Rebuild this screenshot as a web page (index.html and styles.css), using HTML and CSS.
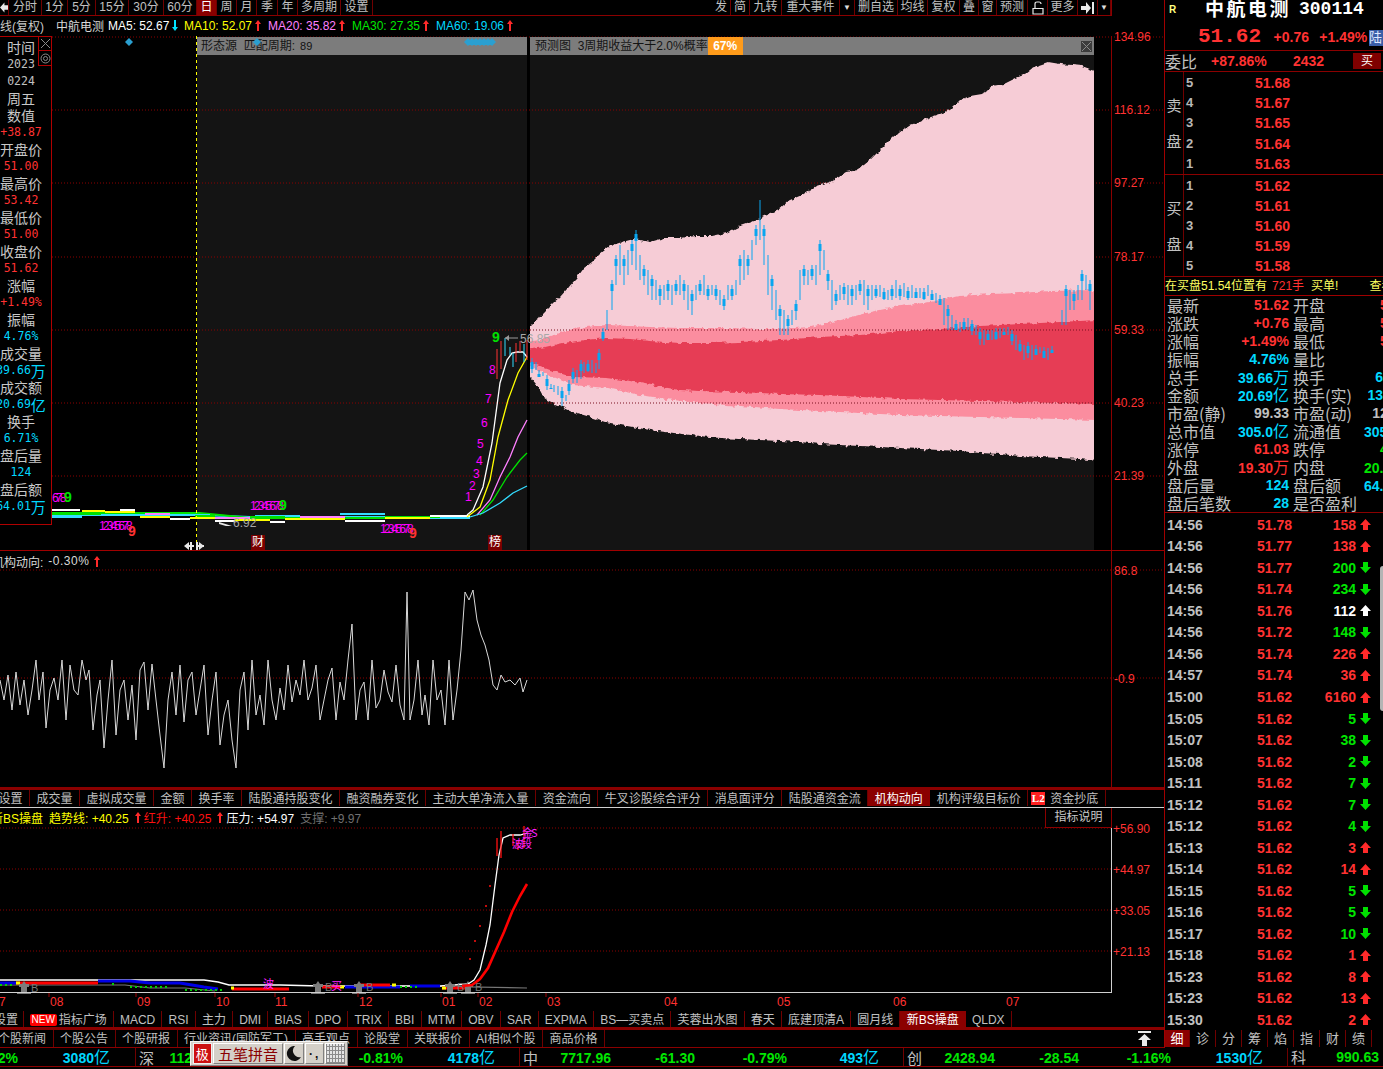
FILE: index.html
```html
<!DOCTYPE html>
<html lang="zh">
<head>
<meta charset="utf-8">
<title>中航电测 300114</title>
<link rel="stylesheet" href="styles.css">
</head>
<body>
<svg class="defs" width="0" height="0">
  <symbol id="up" viewBox="0 0 11 11"><path d="M5.5 0L11 6H8V11H3V6H0Z"/></symbol>
  <symbol id="down" viewBox="0 0 11 11"><path d="M5.5 11L11 5H8V0H3V5H0Z"/></symbol>
  <symbol id="thin-up" viewBox="0 0 6 11"><path d="M3 0L6 4H4V11H2V4H0Z"/></symbol>
  <symbol id="thin-down" viewBox="0 0 6 11"><path d="M3 11L6 7H4V0H2V7H0Z"/></symbol>
  <filter id="rough" x="-2%" y="-2%" width="104%" height="104%">
    <feTurbulence type="fractalNoise" baseFrequency="0.22" numOctaves="2" seed="7"/>
    <feDisplacementMap in="SourceGraphic" scale="5" xChannelSelector="R" yChannelSelector="G"/>
  </filter>
</svg>
<div class="app">
  <div class="main">
    <div class="toolbar">
      <div class="tool-group">
        <span class="tool w9"><svg width="9" height="11" viewBox="0 0 9 11"><path class="fill-light" d="M0 5.5L5 0V3H9V8H5V11Z"/></svg></span>
        <span class="tool w33">分时</span><span class="tool w26">1分</span><span class="tool w28">5分</span><span class="tool w33">15分</span><span class="tool w35">30分</span><span class="tool w33">60分</span><span class="tool w20 active">日</span><span class="tool w20">周</span><span class="tool w20">月</span><span class="tool w21">季</span><span class="tool w20">年</span><span class="tool w43">多周期</span><span class="tool w32">设置</span>
      </div>
      <div class="tool-group">
        <span class="tool w19">发</span><span class="tool w19">简</span><span class="tool w32">九转</span><span class="tool w58">重大事件</span><span class="tool w15 caret">▼</span><span class="tool w43">删自选</span><span class="tool w30">均线</span><span class="tool w32">复权</span><span class="tool w19">叠</span><span class="tool w18">窗</span><span class="tool w31">预测</span>
        <span class="tool w20"><svg width="12" height="14" viewBox="0 0 12 14"><path class="stroke-light" d="M1 7.5H11V13H1ZM3 7V3Q3 1 5 1H7Q9 1 9 3" fill="none"/></svg></span>
        <span class="tool w30">更多</span>
        <span class="tool w20"><svg width="13" height="12" viewBox="0 0 13 12"><path class="fill-light" d="M0 4H5V0L10 6L5 12V8H0ZM11 0H13V12H11Z"/></svg></span>
        <span class="tool w13 caret">▼</span>
      </div>
    </div>
    <div class="ma-row">
      <span class="ma-name">K线(复权)</span>
      <span class="ma-stock">中航电测</span>
      <span class="ma ma-first c-white">MA5: 52.67<svg class="ma-arrow c-cyan"><use href="#thin-down"/></svg></span>
      <span class="ma c-yellow">MA10: 52.07<svg class="ma-arrow c-red"><use href="#thin-up"/></svg></span>
      <span class="ma c-pink">MA20: 35.82<svg class="ma-arrow c-red"><use href="#thin-up"/></svg></span>
      <span class="ma c-green">MA30: 27.35<svg class="ma-arrow c-red"><use href="#thin-up"/></svg></span>
      <span class="ma c-cyan">MA60: 19.06<svg class="ma-arrow c-red"><use href="#thin-up"/></svg></span>
    </div>

    <div class="chart chart-main">
      <svg class="plot" width="1164" height="514" viewBox="0 36 1164 514">
        <rect class="panel-dark" x="197" y="55" width="330" height="495"/>
        <rect class="panel-dark" x="530" y="55" width="564" height="495"/>
        <g class="grid">
          <path d="M52 37H1164M52 110H1164M52 183H1164M52 257H1164M52 330H1164M52 403H1164M52 476H1164"/>
        </g>
        <clipPath id="cloud-clip"><rect x="530" y="55" width="564" height="495"/></clipPath>
        <g clip-path="url(#cloud-clip)">
          <path class="cloud-outer" d="M526 330L534 322L538 319L544 312L552 304L560 297L568 288L576 279L584 268L592 262L600 254L610 246L622 242L634 239L650 242L664 238L680 238L696 236L712 236L726 233L740 226L752 222L764 216L778 210L790 200L802 195L816 186L830 182L846 172L858 170L870 160L880 150L892 138L904 128L916 124L928 118L940 114L950 110L960 100L970 96L982 94L992 86L1004 84L1016 78L1026 74L1036 66L1048 62L1060 64L1072 65L1082 66L1098 72V461L1080 459L1060 458L1040 457L1020 456L1000 454L980 453L960 451L940 450L920 449L900 448L880 447L860 446L840 445L820 444L800 442L780 441L760 440L740 439L720 438L700 436L673 433L650 430L627 426L605 422L587 416L573 412L560 406L550 402L543 397L536 384L526 372Z"/>
          <path class="cloud-mid" d="M526 342L540 340L550 336L565 331L580 328L595 326L607 325L630 326L650 327L680 328L700 328L730 328L760 329L780 329L810 327L840 320L870 312L900 306L930 302L960 296L990 294L1020 293L1050 291L1098 290V420L1060 419L1020 418L980 417L940 416L900 415L860 413L820 411L780 409L740 406L700 403L673 400L640 395L607 388L573 385L555 378L540 371L526 364Z"/>
          <path class="cloud-inner" d="M526 350L545 347L563 343L585 340L607 338L630 339L650 341L680 343L710 343L740 342L780 340L820 337L860 335L900 331L940 329L980 326L1020 324L1060 322L1098 320V404L1060 403L1020 402L980 401L940 400L900 399L860 397L820 395L780 394L740 392L700 391L680 390L650 385L630 381L607 378L573 377L550 370L526 361Z"/>
        </g>
        <g class="grid grid-over">
          <path d="M530 330H1094M530 403H1094"/>
        </g>
        <path class="candle-wick" d="M532 358V373M536 362V370M539 370V377M543 372V376M547 375V390M551 384V389M554 385V392M558 386V395M562 387V406M566 395V401M569 380V395M573 368V383M577 370V383M581 360V379M584 362V373M588 360V372M592 360V373M596 363V373M599 349V369M603 328V341M607 310V330M612 280V310M616 255V285M620 245V275M624 255V285M628 250V275M632 240V265M636 230V270M640 255V280M644 265V285M648 270V295M652 275V300M656 280V300M660 285V305M664 285V300M668 280V300M672 285V305M676 280V295M680 275V295M684 280V300M688 285V310M692 290V315M696 285V300M700 280V295M704 275V295M708 285V300M712 285V295M716 285V300M720 290V305M724 295V310M728 285V300M732 285V300M736 280V295M740 255V285M744 250V280M748 255V275M752 240V260M756 225V245M760 200V240M764 225V265M768 255V295M772 275V310M776 290V320M780 305V335M784 310V335M788 315V335M792 310V325M796 300V320M800 270V300M804 265V285M808 270V285M812 265V280M816 265V285M820 240V275M824 250V270M828 270V290M832 280V310M836 290V305M840 285V300M844 283V300M848 285V305M852 285V305M856 285V300M860 280V295M864 280V305M868 285V310M872 285V300M876 285V298M880 285V297M884 288V300M888 290V300M892 285V300M896 280V298M900 285V300M904 283V297M908 287V300M912 285V298M916 288V298M920 288V298M924 288V300M928 285V296M932 290V300M936 293V303M940 295V305M944 298V325M948 305V330M952 315V330M956 320V330M960 322V332M964 318V330M968 318V330M972 320V335M976 325V335M980 328V345M984 330V345M988 330V340M992 330V340M996 328V340M1000 328V338M1004 328V335M1008 327V335M1012 330V345M1016 335V350M1020 340V352M1024 345V360M1028 342V358M1032 345V360M1036 345V355M1040 347V353M1044 347V358M1048 348V360M1052 346V353M1062 310V325M1066 285V325M1070 290V310M1074 290V310M1078 285V300M1082 270V300M1086 275V290M1090 280V310"/>
        <path class="candle-body" d="M532 358V373M539 370V377M543 372V376M547 375V390M551 384V389M562 387V406M569 380V395M573 368V383M581 360V379M588 360V372M599 349V369M603 328V341M612 280V310M616 255V285M624 255V285M632 240V265M636 230V270M644 265V285M652 275V300M660 285V305M668 280V300M676 280V295M684 280V300M692 290V315M700 280V295M708 285V300M716 285V300M724 295V310M732 285V300M740 255V285M748 255V275M756 225V245M764 225V265M772 275V310M780 305V335M788 315V335M796 300V320M804 265V285M812 265V280M820 240V275M828 270V290M836 290V305M844 283V300M852 285V305M860 280V295M868 285V310M876 285V298M884 288V300M892 285V300M900 285V300M908 287V300M916 288V298M924 288V300M932 290V300M940 295V305M948 305V330M956 320V330M964 318V330M972 320V335M980 328V345M988 330V340M996 328V340M1004 328V335M1012 330V345M1020 340V352M1028 342V358M1036 345V355M1044 347V358M1052 346V353M1066 285V325M1074 290V310M1082 270V300M1090 280V310"/>

        <g class="ma-band">
          <path class="l-cyan" d="M52 515H200L250 517H470"/>
          <path class="l-green" d="M52 513H200L250 518H470"/>
          <path class="l-pink" d="M66 514H100M145 514H170M215 518H250M300 517H345M440 516H465"/>
          <path class="l-cyan" d="M52 517H82M170 515H210M255 516H300M340 514H385M430 518H470"/>
          <path class="l-green" d="M52 514H100V513H140M195 516H215M250 517H285M345 518H385M385 517H440"/>
          <path class="l-yellow" d="M82 511H105M105 512H135M140 517H170M190 518H215M235 520H270M285 519H345M385 518H430"/>
          <path class="l-white" d="M52 510H80M120 510H135M170 519H190M215 521H235M270 522H285M345 521H385M430 516H470"/>
        </g>
        <g class="ma-curves">
          <path class="l-white" d="M467 515L473 510L483 487L492 443L500 383L507 360L512 353L517 352L523 352L527 357"/>
          <path class="l-yellow" d="M467 517L480 507L490 480L498 437L508 400L518 373L527 357"/>
          <path class="l-pink" d="M477 515L490 500L500 477L510 457L518 437L527 420"/>
          <path class="l-green" d="M480 515L493 500L507 477L520 460L527 453"/>
          <path class="l-cyan" d="M470 517L483 513L500 503L513 493L527 486"/>
        </g>
        <path class="tick-red" d="M497 349V379M501 341V369M516 343V362M520 341V352M527 340V360"/>
        <path class="tick-cyan" d="M505 338V356M510 347V355M513 353V367M524 344V362"/>
        <path class="l-gray" d="M505 338H518"/>
        <path class="fill-gray" d="M505 338L509 335V341Z"/>
        <text class="mark-gray" x="520" y="343">56.85</text>
        <text class="mark-gray" x="233" y="527">6.92</text>
        <path class="fill-light" d="M219 522L232 526H226L219 524Z"/>

        <g class="td">
          <text x="465" y="501">1</text><text x="469" y="490">2</text><text x="473" y="478">3</text><text x="476" y="465">4</text><text x="477" y="448">5</text><text x="481" y="427">6</text><text x="485" y="403">7</text><text x="489" y="374">8</text>
        </g>
        <text class="td-nine c-fill-green" x="492" y="342">9</text>
        <text class="td-run" x="52" y="502">678</text><text class="td-nine c-fill-green" x="64" y="502">9</text>
        <text class="td-run" x="99" y="530">12345678</text><text class="td-nine c-fill-red" x="128" y="536">9</text>
        <text class="td-run" x="250" y="510">12345678</text><text class="td-nine c-fill-green" x="279" y="510">9</text>
        <text class="td-run" x="380" y="533">12345678</text><text class="td-nine c-fill-red" x="409" y="538">9</text>

        <path class="dash-yellow" d="M196.500 36V550"/>
        <path class="fill-light" d="M184 546L189 542V550ZM204 546L199 542V550ZM190 542H192V550H190ZM196 542H198V550H196Z"/>
        <path class="fill-light" d="M189 545H194V547H189ZM198 545H204V547H198Z"/>
        <path class="axis-line" d="M1111.500 36V550"/>
        <g class="axis-text">
          <text x="1114" y="41">134.96</text><text x="1114" y="114">116.12</text><text x="1114" y="187">97.27</text><text x="1114" y="261">78.17</text><text x="1114" y="334">59.33</text><text x="1114" y="407">40.23</text><text x="1114" y="480">21.39</text>
        </g>
      </svg>

      <div class="pane-head pane-source"><span class="head-a">形态源&nbsp;&nbsp;匹配周期:</span><span class="head-b">89</span></div>
      <div class="pane-head pane-forecast">
        <span class="head-a">预测图&nbsp;&nbsp;3周期收益大于2.0%概率</span><span class="badge">67%</span>
        <span class="pane-close"><svg width="11" height="11" viewBox="0 0 11 11"><path d="M1 1L10 10M10 1L1 10"/></svg></span>
      </div>
      <svg class="signal-marks" width="500" height="14" viewBox="0 36 500 14">
        <path d="M129 38L133 42L129 46L125 42ZM257 38L261 42L257 46L253 42Z"/>
        <path d="M468 38L472 42L468 46L464 42ZM472 38L476 42L472 46L468 42ZM476 38L480 42L476 46L472 42ZM480 38L484 42L480 46L476 42ZM484 38L488 42L484 46L480 42ZM488 38L492 42L488 46L484 42ZM492 38L496 42L492 46L488 42Z"/>
      </svg>
      <span class="tag tag-cai">财</span>
      <span class="tag tag-bang">榜</span>

      <div class="info">
        <div class="info-tools">
          <span class="info-btn"><svg width="11" height="11" viewBox="0 0 11 11"><path d="M1 1L10 10M10 1L1 10"/></svg></span>
          <span class="info-btn"><svg width="11" height="11" viewBox="0 0 11 11"><circle cx="5.500" cy="5.500" r="4.500"/><circle cx="5.500" cy="5.500" r="2"/></svg></span>
        </div>
        <div class="i-l">时间</div><div class="i-v">2023</div><div class="i-v">0224</div><div class="i-l">周五</div><div class="i-l">数值</div>
        <div class="i-v c-red">+38.87</div><div class="i-l">开盘价</div><div class="i-v c-red">51.00</div><div class="i-l">最高价</div><div class="i-v c-red">53.42</div>
        <div class="i-l">最低价</div><div class="i-v c-red">51.00</div><div class="i-l">收盘价</div><div class="i-v c-red">51.62</div><div class="i-l">涨幅</div>
        <div class="i-v c-red">+1.49%</div><div class="i-l">振幅</div><div class="i-v c-cyan">4.76%</div><div class="i-l">成交量</div><div class="i-v c-cyan">39.66<b>万</b></div>
        <div class="i-l">成交额</div><div class="i-v c-cyan">20.69<b>亿</b></div><div class="i-l">换手</div><div class="i-v c-cyan">6.71%</div><div class="i-l">盘后量</div>
        <div class="i-v c-cyan">124</div><div class="i-l">盘后额</div><div class="i-v c-cyan">64.01<b>万</b></div>
      </div>
    </div>

    <div class="chart chart-ind">
      <svg class="plot" width="1164" height="236" viewBox="0 551 1164 236">
        <g class="grid"><path d="M0 570H1164M0 678H1164"/></g>
        <polyline class="l-thin" points="0,680 4,700 8,675 12,710 16,672 20,705 24,680 28,715 32,690 36,660 39,700 43,672 46,728 50,690 54,678 58,700 62,660 66,720 70,665 74,690 78,695 82,660 86,680 89,670 93,730 97,695 100,680 104,748 108,700 112,660 116,735 120,690 124,680 128,720 132,685 136,740 140,670 144,662 148,710 152,664 156,700 160,735 164,768 168,700 172,672 176,715 180,665 184,722 188,680 192,672 196,715 200,690 204,665 208,735 212,700 216,672 220,745 224,715 228,700 232,740 236,768 240,690 244,672 248,730 252,660 256,715 260,695 264,725 268,660 272,700 276,720 280,688 284,710 288,665 292,702 296,680 300,695 304,660 308,700 312,688 316,665 320,720 324,700 328,680 332,668 336,720 340,682 344,700 348,660 352,624 356,720 360,690 364,682 368,720 372,660 376,708 380,700 384,670 388,692 392,702 396,665 400,705 404,720 407,592 410,720 414,700 418,660 422,715 425,695 429,725 433,660 437,700 441,690 445,725 449,660 453,720 457,690 461,650 465,592 469,600 473,590 477,620 481,635 485,645 489,660 493,685 497,690 501,675 505,682 510,680 515,685 520,678 523,692 527,680"/>
        <path class="axis-line" d="M1111.500 551V787"/>
        <g class="axis-text"><text x="1114" y="575">86.8</text><text x="1114" y="683">-0.9</text></g>
      </svg>
      <div class="chart-label ind-label"><span class="c-light">机构动向:</span><span class="c-light ind-value">-0.30%</span><svg class="ma-arrow c-red"><use href="#thin-up"/></svg></div>
    </div>

    <div class="tabs tabs-a">
      <span class="tab clip-a">设置</span><span class="tab">成交量</span><span class="tab">虚拟成交量</span><span class="tab">金额</span><span class="tab">换手率</span><span class="tab">陆股通持股变化</span><span class="tab">融资融券变化</span><span class="tab">主动大单净流入量</span><span class="tab">资金流向</span><span class="tab">牛叉诊股综合评分</span><span class="tab">消息面评分</span><span class="tab">陆股通资金流</span><span class="tab active">机构动向</span><span class="tab">机构评级目标价</span><span class="tab tab-l2"><i class="l2">L2</i>资金抄底</span>
    </div>

    <div class="chart chart-bs">
      <svg class="plot" width="1164" height="203" viewBox="0 808 1164 203">
        <g class="grid"><path d="M0 828H1111M0 869H1111M0 910H1111M0 951H1111"/></g>
        <path class="l-gray2" d="M0 985H125L150 988H185L215 991M400 986H414L527 988"/>
        <g class="low-bands">
          <path class="b-white" d="M0 980H204L218 982L229 985H280L320 986H440L468 984"/>
          <path class="b-blue" d="M0 983H16M98 981H130L150 983H180L204 987L218 989M345 987H400M410 986H440"/>
          <path class="b-red" d="M16 983H98M232 989H289M322 987H340M360 985H390M442 988H470"/>
          <path class="b-yellow" d="M16 983H20M231 988H234M340 987H344M392 985H396M442 988H446"/>
        </g>
        <path class="dots-green" d="M0 985H14M112 984H116M130 987H170M185 990H222M400 987H420"/>
        <g class="anchors">
          <path d="M24 981L26 984H29V987H27V992H31V994H17V992H21V987H19V984H22Z"/>
          <path d="M318 981L320 984H323V987H321V992H325V994H311V992H315V987H313V984H316Z"/>
          <path d="M359 981L361 984H364V987H362V992H366V994H352V992H356V987H354V984H357Z"/>
          <path d="M450 981L452 984H455V987H453V992H457V994H443V992H447V987H445V984H448Z"/>
          <path d="M468 981L470 984H473V987H471V992H475V994H461V992H465V987H463V984H466Z"/>
        </g>
        <text class="mark-b" x="31" y="992">B</text><text class="mark-b" x="325" y="991">B</text><text class="mark-b" x="366" y="991">B</text><text class="mark-b" x="457" y="991">B</text><text class="mark-b" x="475" y="991">B</text>
        <path class="l-bs-white" d="M468 984L474 980L480 970L486 945L490 925L495 885L499 855L503 838L510 835L520 835L527 833"/>
        <path class="l-bs-red" d="M462 986L472 985L480 979L488 968L496 950L504 932L512 912L520 896L527 884"/>
        <path class="tick-bs" d="M497 838V856M501 831V858M513 834V846M518 840V850M524 826V848"/>
        <path class="dots-red" d="M470 958V960M475 940V942M480 925V927M486 905V907M490 885V887"/>
        <text class="bs-mark" x="512" y="848">波段</text><text class="bs-mark" x="522" y="837">金S</text>
        <text class="bs-mark" x="263" y="988">波</text><text class="bs-mark" x="331" y="990">买</text>
        <path class="axis-white" d="M1111.500 808V992.500M0 992.500H1112"/>
        <g class="axis-text">
          <text x="1113" y="833">+56.90</text><text x="1113" y="874">+44.97</text><text x="1113" y="915">+33.05</text><text x="1113" y="956">+21.13</text>
        </g>
        <g class="date-ticks"><path d="M49 993V997M136 993V997M215 993V997M275 993V997M358 993V997M441 993V997M478 993V997M546 993V997"/></g>
        <g class="axis-text dates">
          <text x="-1" y="1006">7</text><text x="50" y="1006">08</text><text x="137" y="1006">09</text><text x="216" y="1006">10</text><text x="275" y="1006">11</text><text x="359" y="1006">12</text><text x="442" y="1006">01</text><text x="479" y="1006">02</text><text x="547" y="1006">03</text><text x="664" y="1006">04</text><text x="777" y="1006">05</text><text x="893" y="1006">06</text><text x="1006" y="1006">07</text>
        </g>
      </svg>
      <div class="chart-label bs-label">
        <span class="c-yellow">新BS操盘</span>
        <span class="c-yellow">趋势线: +40.25</span><svg class="ma-arrow c-red"><use href="#thin-up"/></svg>
        <span class="c-redb">红升: +40.25</span><svg class="ma-arrow c-red"><use href="#thin-up"/></svg>
        <span class="c-white">压力: +54.97</span>
        <span class="c-dim">支撑: +9.97</span>
      </div>
      <span class="explain">指标说明</span>
    </div>

    <div class="tabs tabs-b">
      <span class="tab clip-b">设置</span><span class="tab"><i class="new">NEW</i>指标广场</span><span class="tab">MACD</span><span class="tab">RSI</span><span class="tab">主力</span><span class="tab">DMI</span><span class="tab">BIAS</span><span class="tab">DPO</span><span class="tab">TRIX</span><span class="tab">BBI</span><span class="tab">MTM</span><span class="tab">OBV</span><span class="tab">SAR</span><span class="tab">EXPMA</span><span class="tab">BS—买卖点</span><span class="tab">芙蓉出水图</span><span class="tab">春天</span><span class="tab">底建顶清A</span><span class="tab">圆月线</span><span class="tab active">新BS操盘</span><span class="tab">QLDX</span>
    </div>
    <div class="tabs tabs-c">
      <span class="tab clip-c">个股新闻</span><span class="tab">个股公告</span><span class="tab">个股研报</span><span class="tab">行业资讯(国防军工)</span><span class="tab">高手观点</span><span class="tab">论股堂</span><span class="tab">关联报价</span><span class="tab">AI相似个股</span><span class="tab">商品价格</span>
      <span class="to-top"><svg width="13" height="15" viewBox="0 0 13 15"><path class="fill-light" d="M0 0H13V2H0ZM6.500 3L13 9H9V15H4V9H0Z"/></svg></span>
    </div>
  </div>

  <aside class="side">
    <div class="title-row"><span class="r-mark">R</span><span class="title-name">中航电测</span><span class="title-code">300114</span></div>
    <div class="price-row">
      <span class="big-price">51.62</span><span class="num c-red pr-a">+0.76</span><span class="num c-red pr-b">+1.49%</span><span class="lu">陆</span>
    </div>
    <div class="ratio-row">
      <span class="lab">委比</span><span class="num c-red ra-a">+87.86%</span><span class="num c-red ra-b">2432</span><span class="buy-btn">买</span>
    </div>
    <div class="book book-sell">
      <div class="book-side">卖<br>盘</div>
      <div class="book-rows">
        <div class="book-row"><span class="lvl">5</span><span class="num c-red">51.68</span></div>
        <div class="book-row"><span class="lvl">4</span><span class="num c-red">51.67</span></div>
        <div class="book-row"><span class="lvl">3</span><span class="num c-red">51.65</span></div>
        <div class="book-row"><span class="lvl">2</span><span class="num c-red">51.64</span></div>
        <div class="book-row"><span class="lvl">1</span><span class="num c-red">51.63</span></div>
      </div>
    </div>
    <div class="book book-buy">
      <div class="book-side">买<br>盘</div>
      <div class="book-rows">
        <div class="book-row"><span class="lvl">1</span><span class="num c-red">51.62</span></div>
        <div class="book-row"><span class="lvl">2</span><span class="num c-red">51.61</span></div>
        <div class="book-row"><span class="lvl">3</span><span class="num c-red">51.60</span></div>
        <div class="book-row"><span class="lvl">4</span><span class="num c-red">51.59</span></div>
        <div class="book-row"><span class="lvl">5</span><span class="num c-red">51.58</span></div>
      </div>
    </div>
    <div class="notice"><span>在买盘51.54位置有</span><span class="n-qty">721手</span><span>买单!</span><span class="n-look">查看</span></div>
    <div class="stats">
      <span class="lab">最新</span><span class="num c-red">51.62</span><span class="lab">开盘</span><span class="num c-red">51.00</span>
      <span class="lab">涨跌</span><span class="num c-red">+0.76</span><span class="lab">最高</span><span class="num c-red">53.42</span>
      <span class="lab">涨幅</span><span class="num c-red">+1.49%</span><span class="lab">最低</span><span class="num c-red">51.00</span>
      <span class="lab">振幅</span><span class="num c-cyan">4.76%</span><span class="lab">量比</span><span class="num c-gray">1.02</span>
      <span class="lab">总手</span><span class="num c-cyan">39.66<b>万</b></span><span class="lab">换手</span><span class="num c-cyan">6.71%</span>
      <span class="lab">金额</span><span class="num c-cyan">20.69<b>亿</b></span><span class="lab">换手(实)</span><span class="num c-cyan">13.82%</span>
      <span class="lab">市盈(静)</span><span class="num c-gray">99.33</span><span class="lab">市盈(动)</span><span class="num c-gray">128.50</span>
      <span class="lab">总市值</span><span class="num c-cyan">305.0<b>亿</b></span><span class="lab">流通值</span><span class="num c-cyan">305.0<b>亿</b></span>
      <span class="lab">涨停</span><span class="num c-red">61.03</span><span class="lab">跌停</span><span class="num c-green">40.69</span>
      <span class="lab">外盘</span><span class="num c-red">19.30<b>万</b></span><span class="lab">内盘</span><span class="num c-green">20.36<b>万</b></span>
      <span class="lab">盘后量</span><span class="num c-cyan">124</span><span class="lab">盘后额</span><span class="num c-cyan">64.01<b>万</b></span>
      <span class="lab">盘后笔数</span><span class="num c-cyan">28</span><span class="lab">是否盈利</span><span class="num c-cyan"></span>
    </div>
    <div class="ticks">
      <div class="tk"><span class="tk-t">14:56</span><span class="num c-red">51.78</span><span class="num c-red">158</span><svg class="tk-a c-red"><use href="#up"/></svg></div>
      <div class="tk"><span class="tk-t">14:56</span><span class="num c-red">51.77</span><span class="num c-red">138</span><svg class="tk-a c-red"><use href="#up"/></svg></div>
      <div class="tk"><span class="tk-t">14:56</span><span class="num c-red">51.77</span><span class="num c-green">200</span><svg class="tk-a c-green"><use href="#down"/></svg></div>
      <div class="tk"><span class="tk-t">14:56</span><span class="num c-red">51.74</span><span class="num c-green">234</span><svg class="tk-a c-green"><use href="#down"/></svg></div>
      <div class="tk"><span class="tk-t">14:56</span><span class="num c-red">51.76</span><span class="num c-white">112</span><svg class="tk-a c-white"><use href="#up"/></svg></div>
      <div class="tk"><span class="tk-t">14:56</span><span class="num c-red">51.72</span><span class="num c-green">148</span><svg class="tk-a c-green"><use href="#down"/></svg></div>
      <div class="tk"><span class="tk-t">14:56</span><span class="num c-red">51.74</span><span class="num c-red">226</span><svg class="tk-a c-red"><use href="#up"/></svg></div>
      <div class="tk"><span class="tk-t">14:57</span><span class="num c-red">51.74</span><span class="num c-red">36</span><svg class="tk-a c-red"><use href="#up"/></svg></div>
      <div class="tk"><span class="tk-t">15:00</span><span class="num c-red">51.62</span><span class="num c-red">6160</span><svg class="tk-a c-red"><use href="#up"/></svg></div>
      <div class="tk"><span class="tk-t">15:05</span><span class="num c-red">51.62</span><span class="num c-green">5</span><svg class="tk-a c-green"><use href="#down"/></svg></div>
      <div class="tk"><span class="tk-t">15:07</span><span class="num c-red">51.62</span><span class="num c-green">38</span><svg class="tk-a c-green"><use href="#down"/></svg></div>
      <div class="tk"><span class="tk-t">15:08</span><span class="num c-red">51.62</span><span class="num c-green">2</span><svg class="tk-a c-green"><use href="#down"/></svg></div>
      <div class="tk"><span class="tk-t">15:11</span><span class="num c-red">51.62</span><span class="num c-green">7</span><svg class="tk-a c-green"><use href="#down"/></svg></div>
      <div class="tk"><span class="tk-t">15:12</span><span class="num c-red">51.62</span><span class="num c-green">7</span><svg class="tk-a c-green"><use href="#down"/></svg></div>
      <div class="tk"><span class="tk-t">15:12</span><span class="num c-red">51.62</span><span class="num c-green">4</span><svg class="tk-a c-green"><use href="#down"/></svg></div>
      <div class="tk"><span class="tk-t">15:13</span><span class="num c-red">51.62</span><span class="num c-red">3</span><svg class="tk-a c-red"><use href="#up"/></svg></div>
      <div class="tk"><span class="tk-t">15:14</span><span class="num c-red">51.62</span><span class="num c-red">14</span><svg class="tk-a c-red"><use href="#up"/></svg></div>
      <div class="tk"><span class="tk-t">15:15</span><span class="num c-red">51.62</span><span class="num c-green">5</span><svg class="tk-a c-green"><use href="#down"/></svg></div>
      <div class="tk"><span class="tk-t">15:16</span><span class="num c-red">51.62</span><span class="num c-green">5</span><svg class="tk-a c-green"><use href="#down"/></svg></div>
      <div class="tk"><span class="tk-t">15:17</span><span class="num c-red">51.62</span><span class="num c-green">10</span><svg class="tk-a c-green"><use href="#down"/></svg></div>
      <div class="tk"><span class="tk-t">15:18</span><span class="num c-red">51.62</span><span class="num c-red">1</span><svg class="tk-a c-red"><use href="#up"/></svg></div>
      <div class="tk"><span class="tk-t">15:23</span><span class="num c-red">51.62</span><span class="num c-red">8</span><svg class="tk-a c-red"><use href="#up"/></svg></div>
      <div class="tk"><span class="tk-t">15:23</span><span class="num c-red">51.62</span><span class="num c-red">13</span><svg class="tk-a c-red"><use href="#up"/></svg></div>
      <div class="tk"><span class="tk-t">15:30</span><span class="num c-red">51.62</span><span class="num c-red">2</span><svg class="tk-a c-red"><use href="#up"/></svg></div>
    </div>
    <div class="side-tabs">
      <span class="st active">细</span><span class="st">诊</span><span class="st">分</span><span class="st">筹</span><span class="st">焰</span><span class="st">指</span><span class="st">财</span><span class="st">绩</span>
    </div>
    <span class="thumb"></span>
  </aside>

  <div class="ticker">
    <div class="seg seg-first"><span class="seg-n">沪</span><span class="num c-green">3279.61</span><span class="num c-green">-18.43</span><span class="num c-green">-0.62%</span><span class="num c-cyan">3080<b>亿</b></span></div>
    <div class="seg"><span class="seg-n">深</span><span class="num c-green">11203.06</span><span class="num c-green">-91.36</span><span class="num c-green">-0.81%</span><span class="num c-cyan">4178<b>亿</b></span></div>
    <div class="seg"><span class="seg-n">中</span><span class="num c-green">7717.96</span><span class="num c-green">-61.30</span><span class="num c-green">-0.79%</span><span class="num c-cyan">493<b>亿</b></span></div>
    <div class="seg"><span class="seg-n">创</span><span class="num c-green">2428.94</span><span class="num c-green">-28.54</span><span class="num c-green">-1.16%</span><span class="num c-cyan">1530<b>亿</b></span></div>
    <div class="seg"><span class="seg-n">科</span><span class="num c-green">990.63</span></div>
  </div>

  <div class="ime">
    <span class="ime-logo">极</span>
    <span class="ime-name">五笔拼音</span>
    <span class="ime-key"><svg width="15" height="15" viewBox="0 0 15 15"><path d="M9 0A7.500 7.500 0 1 0 15 11A6.500 6.500 0 0 1 9 0Z"/></svg></span>
    <span class="ime-key ime-dots">·,</span>
    <span class="ime-key ime-kb"></span>
  </div>
</div>
</body>
</html>
```
FILE: styles.css
```css
* { box-sizing: border-box; }
html, body { margin: 0; padding: 0; background: #000; }
body {
  font-family: "Liberation Sans", "Noto Sans CJK SC", sans-serif;
  font-size: 12px;
  color: #c0c0c0;
}
.defs { position: absolute; }
.app {
  position: relative;
  display: grid;
  grid-template-columns: 1164px 219px;
  grid-template-rows: 1048px 21px;
  width: 1383px;
  height: 1069px;
  overflow: hidden;
  background: #000;
}

/* colours */
.c-red { color: #ff3232; fill: #ff2a2a; }
.c-redb { color: #ff1010; }
.c-cyan { color: #00d8ff; fill: #00e4ff; }
.c-green { color: #00e600; fill: #00e000; }
.c-white { color: #fff; fill: #fff; }
.c-yellow { color: #ffff00; }
.c-pink { color: #ff80ff; }
.c-gray { color: #c0c0c0; }
.c-light { color: #d8d8d8; }
.c-dim { color: #707070; }
.c-fill-green { fill: #00e000; }
.c-fill-red { fill: #ff3232; }
.fill-light { fill: #e8e8e8; }
.fill-gray { fill: #9a9a9a; }
.stroke-light { stroke: #e8e8e8; stroke-width: 1.200; }

/* main column */
.main { display: flex; flex-direction: column; min-width: 0; overflow: hidden; }
.toolbar {
  display: flex;
  justify-content: space-between;
  height: 16px;
  width: 1112px;
  border-bottom: 1px solid #8b0000;
  border-right: 1px solid #8b0000;
  line-height: 15px;
}
.tool-group { display: flex; }
.tool {
  flex: none;
  justify-content: center;
  border-right: 1px solid #6f0000;
  white-space: nowrap;
  display: flex;
  align-items: center;
}
.tool.active { background: #8b0000; color: #fff; }
.w9 { width: 9px; }
.w13 { width: 13px; }
.w15 { width: 15px; }
.w18 { width: 18px; }
.w19 { width: 19px; }
.w20 { width: 20px; }
.w21 { width: 21px; }
.w26 { width: 26px; }
.w28 { width: 28px; }
.w30 { width: 30px; }
.w31 { width: 31px; }
.w32 { width: 32px; }
.w33 { width: 33px; }
.w35 { width: 35px; }
.w43 { width: 43px; }
.w58 { width: 58px; }
.caret { font-size: 8px; color: #ddd; }

.ma-row {
  display: flex;
  align-items: center;
  height: 20px;
  white-space: nowrap;
  padding-bottom: 1px;
}
.ma-name { margin-left: -8px; width: 64px; color: #c8c8c8; }
.ma-stock { width: 52px; color: #d8d8d8; }
.ma { display: inline-flex; align-items: center; width: 84px; gap: 3px; flex: none; }
.ma-first { width: 76px; }
.ma-arrow { width: 6px; height: 11px; flex: none; }

.chart { position: relative; flex: none; }
.chart-main { height: 515px; border-bottom: 1px solid #a00000; }
.chart-ind { height: 236px; overflow: hidden; }
.chart-bs { height: 203px; overflow: hidden; }
.plot { display: block; overflow: visible; }

.panel-dark { fill: #141414; }
.grid path { stroke: #8b0000; stroke-width: 1; stroke-dasharray: 1 2; fill: none; }
.grid-over path { stroke: #7a1020; }
.cloud-outer { fill: #f6ccd6; filter: url(#rough); }
.cloud-mid { fill: #fb8d9f; filter: url(#rough); }
.cloud-inner { fill: #e63e54; filter: url(#rough); }
.candle-wick { stroke: #08a6f0; stroke-width: 1; fill: none; }
.candle-body { stroke: #08a6f0; stroke-width: 3; fill: none; stroke-dasharray: 0 4 7 200; }
.ma-band path { fill: none; stroke-width: 2; }
.ma-curves path { fill: none; stroke-width: 1.300; }
.l-white { stroke: #fff; }
.l-yellow { stroke: #ffff00; }
.l-pink { stroke: #ff80ff; }
.l-green { stroke: #00e000; }
.l-cyan { stroke: #33dcff; }
.l-gray { stroke: #9a9a9a; fill: none; }
.l-thin { fill: none; stroke: #d8d8d8; stroke-width: 1; }
.l-gray2 { fill: none; stroke: #777; stroke-width: 1.200; }
.low-bands path { fill: none; }
.b-white { stroke: #fff; stroke-width: 1.300; }
.b-blue { stroke: #0000e6; stroke-width: 3; }
.b-red { stroke: #ff0000; stroke-width: 3; }
.b-yellow { stroke: #ffff00; stroke-width: 3; }
.dots-green { fill: none; stroke: #00d000; stroke-width: 2; stroke-dasharray: 2 3; }
.anchors path { fill: #7c7c7c; }
.mark-b { font-size: 11px; fill: #777; }
.l-bs-white { fill: none; stroke: #fff; stroke-width: 1.300; }
.l-bs-red { fill: none; stroke: #ff0000; stroke-width: 2.600; }
.tick-bs { fill: none; stroke: #ff1010; stroke-width: 1.300; }
.dots-red { fill: none; stroke: #ff1010; stroke-width: 1.500; }
.bs-mark { font-size: 11px; fill: #ff20ff; font-family: "Noto Sans CJK SC", sans-serif; letter-spacing: -2px; }
.tick-red { stroke: #ff3232; fill: none; }
.tick-cyan { stroke: #33dcff; fill: none; }
.mark-gray { font-size: 12px; fill: #a8a8a8; }
.td text, .td-run { font-size: 12px; fill: #ff00ff; }
.td-run { letter-spacing: -2.800px; }
.td-nine { font-size: 14px; font-weight: bold; }
.signal-marks { position: absolute; left: 0; top: 0; }
.signal-marks path { fill: #2a9fd0; }
.dash-yellow { stroke: #ffff00; stroke-dasharray: 3 3; fill: none; }
.axis-line { stroke: #8b0000; fill: none; }
.axis-white { stroke: #d0d0d0; fill: none; }
.axis-text text { font-size: 12px; fill: #ff3232; }
.dates text { font-size: 12px; }
.date-ticks path { stroke: #a00000; fill: none; }

.pane-head {
  position: absolute;
  top: 1px;
  height: 18px;
  background: #7c7c7c;
  color: #111;
  line-height: 18px;
  white-space: nowrap;
  display: flex;
}
.pane-source { left: 197px; width: 330px; padding-left: 4px; }
.pane-forecast { left: 530px; width: 564px; padding-left: 5px; }
.head-a { color: #141414; }
.head-b { margin-left: 5px; font-size: 11px; }
.badge {
  background: #ff9b1a;
  color: #fff;
  font-weight: bold;
  width: 35px;
  text-align: center;
}
.pane-close {
  position: absolute;
  right: 2px;
  top: 4px;
  width: 11px;
  height: 11px;
  background: #3c3c3c;
  display: flex;
}
.pane-close path, .info-btn path, .info-btn circle { stroke: #8a8a8a; fill: none; }
.tag {
  position: absolute;
  width: 14px;
  height: 15px;
  background: #7a0000;
  color: #fff;
  line-height: 15px;
  text-align: center;
  font-size: 12px;
}
.tag-cai { left: 251px; top: 499px; }
.tag-bang { left: 488px; top: 499px; }

.info {
  position: absolute;
  left: 0;
  top: 0;
  width: 52px;
  height: 489px;
  background: #000;
  border: 1px solid #b00000;
  border-left: 0;
  overflow: hidden;
  padding-top: 2px;
}
.info-tools {
  position: absolute;
  right: 0;
  top: 0;
  width: 13px;
  height: 29px;
  border-left: 1px solid #b00000;
  border-bottom: 1px solid #b00000;
}
.info-btn { display: flex; width: 12px; height: 14px; align-items: center; justify-content: center; border-bottom: 1px solid #b00000; }
.info-btn:last-child { border: 0; }
.i-l, .i-v {
  display: flex;
  justify-content: center;
  height: 17px;
  width: 42px;
  line-height: 17px;
  white-space: nowrap;
}
.i-l { font-family: "Noto Sans CJK SC", sans-serif; font-size: 14px; color: #c8c8c8; }
.i-v { font-family: "DejaVu Sans Mono", monospace; font-size: 11.500px; }
.i-v.c-red { color: #ff3232; }
.i-v b { font-family: "Noto Sans CJK SC", sans-serif; font-weight: 400; font-size: 15px; }

.chart-label {
  position: absolute;
  left: -8px;
  top: 2px;
  display: flex;
  align-items: center;
  gap: 3px;
  white-space: nowrap;
  height: 16px;
}
.ind-label { gap: 5px; }
.ind-value { letter-spacing: 0.500px; }
.bs-label { top: 1px; left: -9px; gap: 3px; }
.bs-label > span { margin-right: 3px; }
.explain {
  position: absolute;
  left: 1045px;
  top: 0;
  width: 67px;
  height: 20px;
  border: 1px solid #8b0000;
  border-top: 0;
  text-align: center;
  line-height: 19px;
  color: #c8c8c8;
}

.tabs { display: flex; flex: none; white-space: nowrap; line-height: 16px; }
.tab { padding: 1px 6.500px 0; border-right: 1px solid #6f0000; color: #c0c0c0; display: flex; align-items: center; }
.tab.active { background: #8b0000; color: #fff; border-color: #8b0000; }
.clip-a { margin-left: -8px; }
.clip-c { margin-left: -8.500px; }
.tabs-a { height: 21px; border-top: 3px solid #8b0000; border-bottom: 1px solid #d0d0d0; padding-bottom: 1px; }
.tabs-b { height: 19px; border-bottom: 3px solid #8b0000; }
.tabs-b .tab { padding-left: 6.150px; padding-right: 6.150px; }
.tabs-b .clip-b { margin-left: -12.500px; padding-left: 6.500px; padding-right: 4.500px; }
.tabs-c { height: 18px; border-bottom: 1px solid #8b0000; position: relative; }
.tab-l2 { padding-left: 3px; }
.l2 {
  background: #ff2020;
  color: #fff;
  font-style: normal;
  font-family: "Liberation Serif", serif;
  font-weight: bold;
  font-size: 11px;
  width: 14px;
  height: 13px;
  line-height: 13px;
  text-align: center;
  margin-right: 5px;
}
.new {
  background: #ff0000;
  color: #fff;
  font-style: normal;
  font-size: 10px;
  width: 27px;
  height: 12px;
  line-height: 12px;
  text-align: center;
  border-radius: 2px;
  margin-right: 2px;
}
.to-top { position: absolute; left: 1138px; top: 1px; display: flex; }

/* side column */
.side {
  position: relative;
  border-left: 1px solid #a00000;
  height: 1048px;
  overflow: hidden;
}
.num { font-weight: bold; font-size: 14px; white-space: nowrap; }
.num b { font-family: "Noto Sans CJK SC", sans-serif; font-weight: 400; font-size: 16px; line-height: 1; }
.lab { font-family: "Noto Sans CJK SC", sans-serif; font-size: 16px; color: #c0c0c0; line-height: 18px; white-space: nowrap; }

.title-row { display: flex; align-items: center; height: 18px; color: #fff; white-space: nowrap; }
.r-mark { color: #ffff80; font-weight: bold; font-size: 10px; margin-left: 4px; width: 36px; }
.title-name { font-family: "Noto Sans CJK SC", sans-serif; font-weight: 700; font-size: 19px; letter-spacing: 2.500px; line-height: 18px; margin-bottom: 3px; }
.title-code { font-family: "Liberation Mono", monospace; font-weight: bold; font-size: 18px; margin-left: 8px; }
.price-row { display: flex; align-items: baseline; height: 33px; padding-top: 7px; border-bottom: 1px solid #8b0000; white-space: nowrap; }
.big-price { font-family: "Liberation Mono", monospace; font-weight: bold; font-size: 21px; color: #ff3232; margin-left: 33px; width: 76px; }
.pr-a { width: 46px; }
.pr-b { width: 50px; }
.lu { background: #3a5ea8; color: #dfe6ff; font-size: 13px; width: 14px; height: 16px; line-height: 16px; }
.ratio-row { display: flex; align-items: center; height: 21px; border-bottom: 1px solid #8b0000; position: relative; }
.ra-a { margin-left: 46px; width: 82px; }
.ra-b { width: 60px; }
.ratio-row .lab { position: absolute; left: 0; }
.buy-btn { background: #7f0000; color: #fff; width: 28px; height: 16px; line-height: 16px; text-align: center; }
.book { display: flex; border-bottom: 1px solid #8b0000; }
.book-sell { height: 103px; }
.book-buy { height: 102px; }
.book-side {
  width: 19px;
  border-right: 1px solid #6f0000;
  font-family: "Noto Sans CJK SC", sans-serif;
  font-size: 15px;
  color: #c0c0c0;
  line-height: 36px;
  text-align: center;
  padding-top: 15px;
}
.book-rows { flex: 1; display: flex; flex-direction: column; justify-content: space-around; padding-top: 1px; }
.book-row { display: flex; height: 20px; line-height: 20px; }
.lvl { font-weight: bold; font-size: 13px; color: #b8b8b8; width: 71px; padding-left: 2px; }
.notice { display: flex; height: 19px; line-height: 18px; border-bottom: 1px solid #a00000; color: #ffff60; white-space: nowrap; }
.n-qty { color: #ff3232; margin: 0 7px 0 5px; }
.n-look { margin-left: 31px; }
.stats {
  display: grid;
  grid-template-columns: 60px 62px 68px 58px;
  grid-auto-rows: 18px;
  width: 250px;
  padding-left: 2px;
  height: 217px;
  border-bottom: 1px solid #8b0000;
  align-items: center;
}
.stats .num { text-align: right; }
.stats .lab:nth-child(4n+3) { padding-left: 4px; }
.ticks { height: 516px; padding-top: 1px; overflow: hidden; }
.tk { display: grid; grid-template-columns: 90px 42px 57px 14px; height: 21.540px; align-items: center; padding-left: 2px; }
.tk-t { font-weight: bold; font-size: 14px; color: #c0c0c0; }
.tk .num:nth-child(3) { text-align: right; }
.tk-a { width: 11px; height: 11px; margin-left: 4px; }
.side-tabs { display: flex; height: 18px; margin-top: 1px; }
.st { width: 26px; height: 17px; border-right: 1px solid #6f0000; text-align: center; line-height: 17px; color: #c0c0c0; font-size: 13px; }
.st.active { background: #8b0000; color: #fff; width: 25px; }
.thumb { position: absolute; right: 0; top: 566px; width: 3px; height: 145px; background: #b4b4b4; border-radius: 3px 0 0 3px; }

/* ticker */
.ticker {
  grid-column: 1 / 3;
  display: flex;
  height: 19px;
  border-bottom: 1px solid #8b0000;
  white-space: nowrap;
  overflow: hidden;
}
.seg {
  flex: none;
  display: grid;
  grid-template-columns: 27px 64px 84px 92px 92px;
  width: 384px;
  height: 18px;
  line-height: 18px;
  align-items: center;
  border-left: 1px solid #6f0000;
}
.seg-first { margin-left: -249px; border-left: 0; }
.seg-n { font-family: "Noto Sans CJK SC", sans-serif; font-size: 15px; line-height: 18px; color: #c0c0c0; padding-left: 3px; }
.seg .num { text-align: right; }
.seg .num b { font-size: 16px; }

/* floating input method bar */
.ime {
  position: absolute;
  left: 190px;
  top: 1041px;
  width: 158px;
  height: 25px;
  background: #d4d0c8;
  border: 1px solid;
  border-color: #f4f4f4 #808080 #808080 #f4f4f4;
  display: flex;
  align-items: center;
  gap: 1px;
  padding: 1px 2px;
}
.ime-logo {
  width: 19px;
  height: 21px;
  background: #cc1010;
  color: #fff;
  text-align: center;
  line-height: 19px;
  font-size: 13px;
  border: 1px solid #f0f0f0;
  font-family: "Noto Sans CJK SC", sans-serif;
}
.ime-name {
  width: 72px;
  height: 21px;
  color: #8b0000;
  font-family: "Noto Sans CJK SC", sans-serif;
  font-size: 15px;
  line-height: 19px;
  text-align: center;
  border: 1px solid;
  border-color: #fff #808080 #808080 #fff;
}
.ime-key {
  width: 20px;
  height: 21px;
  display: flex;
  align-items: center;
  justify-content: center;
  border: 1px solid;
  border-color: #fff #808080 #808080 #fff;
}
.ime-key path { fill: #111; }
.ime-dots { color: #111; font-weight: bold; letter-spacing: 2px; }
.ime-kb {
  background:
    repeating-linear-gradient(0deg, #8a8a8a 0 1px, transparent 1px 4px),
    repeating-linear-gradient(90deg, #8a8a8a 0 1px, #e4e4e4 1px 3px);
}
```
